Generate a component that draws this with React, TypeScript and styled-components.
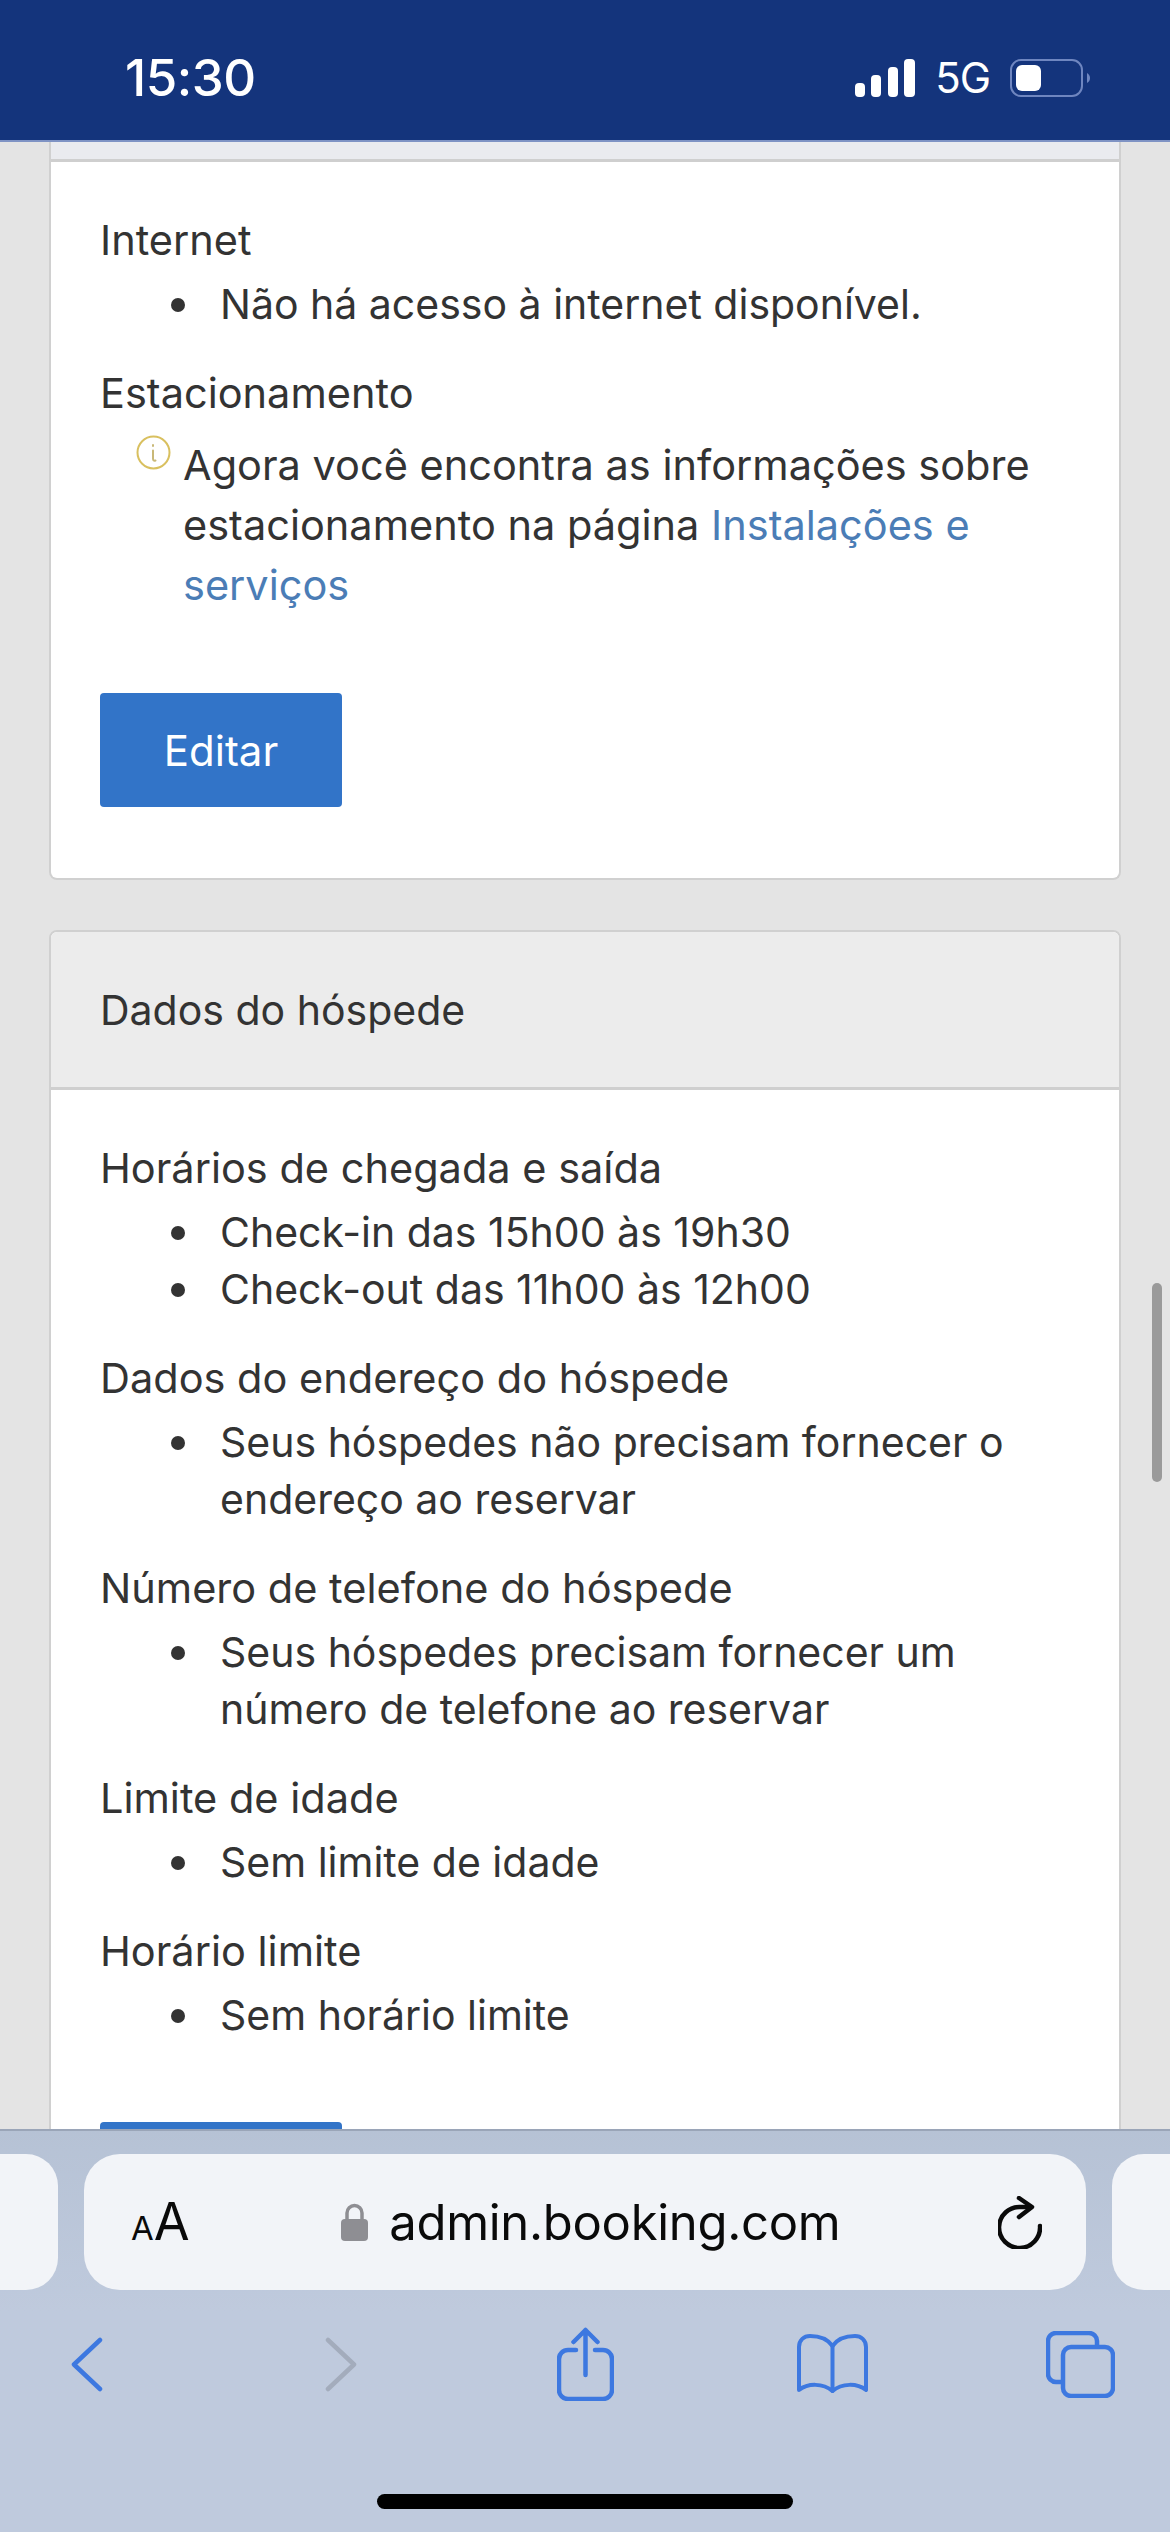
import { FC } from 'react';
import styled, { createGlobalStyle } from 'styled-components';

const GlobalStyle = createGlobalStyle`
  html, body {
    margin: 0;
    padding: 0;
    background: #e4e4e4;
  }
  * {
    box-sizing: border-box;
  }
`;

const Screen = styled.div`
  width: 1170px;
  height: 2532px;
  display: flex;
  flex-direction: column;
  overflow: hidden;
  font-family: Inter, 'Liberation Sans', sans-serif;
  color: #333;
`;

const StatusBar = styled.header`
  flex: none;
  height: 142px;
  padding: 15px 79px 0 125px;
  display: flex;
  align-items: center;
  justify-content: space-between;
  background: #14347c;
  border-bottom: 2px solid #7f93c4;
  color: #fff;
`;

const Clock = styled.span`
  font-size: 51px;
  font-weight: 500;
  letter-spacing: -0.5px;
`;

const StatusIcons = styled.div`
  display: flex;
  align-items: center;
  gap: 20px;
`;

const Network = styled.span`
  font-size: 42px;
  letter-spacing: -1px;
`;

const Main = styled.main`
  flex: 1;
  min-height: 0;
  position: relative;
  overflow: hidden;
  padding: 0 49px;
`;

const ScrollThumb = styled.div`
  position: absolute;
  top: 1141px;
  right: 8px;
  width: 10px;
  height: 199px;
  border-radius: 5px;
  background: #9a9a9a;
`;

const Card = styled.section<{ $clipped?: boolean }>`
  background: #fff;
  border: 2px solid #d0d0d0;
  border-top-width: ${(p) => (p.$clipped ? 0 : 2)}px;
  border-radius: ${(p) => (p.$clipped ? '0 0 8px 8px' : '8px')};
  margin-bottom: 50px;
`;

const CardHeader = styled.h2`
  margin: 0;
  height: 158px;
  padding-left: 49px;
  display: flex;
  align-items: center;
  background: #ececec;
  border-bottom: 3px solid #cfcfcf;
  border-radius: 6px 6px 0 0;
  font-size: 41px;
  font-weight: 420;
  color: #333;
`;

const ClippedHeader = styled.div`
  height: 20px;
  background: #eaebef;
  border-bottom: 3px solid #cfcfcf;
`;

const CardBody = styled.div`
  padding: 48px 49px 71px;
`;

const Heading = styled.h3`
  margin: 0;
  font-size: 41.5px;
  line-height: 60px;
  font-weight: 420;
  color: #333;
`;

const List = styled.ul`
  margin: 6px 0 30px;
  padding: 0 0 0 120px;
  list-style: none;
  font-size: 41px;
  line-height: 57px;
  color: #333;
`;

const Item = styled.li`
  position: relative;

  &::before {
    content: '';
    position: absolute;
    left: -49px;
    top: 22px;
    width: 14px;
    height: 14px;
    border-radius: 50%;
    background: #333;
  }
`;

const Notice = styled.div`
  display: flex;
  align-items: flex-start;
  gap: 11px;
  margin: 12px 0 32px 35px;
  font-size: 41.5px;
  line-height: 60px;
`;

const InfoIcon = styled.svg`
  flex: none;
  width: 37px;
  height: 35px;
`;

const Link = styled.a`
  color: #4b7db6;
`;

/* the top margin collapses with the bottom margin of the list above it */
const EditButton = styled.button`
  display: block;
  width: 242px;
  height: 114px;
  margin-top: 78px;
  border: 0;
  border-radius: 4px;
  background: #3274c8;
  color: #fff;
  font: 400 42px Inter, 'Liberation Sans', sans-serif;
`;

const Toolbar = styled.footer`
  flex: none;
  height: 403px;
  display: flex;
  flex-direction: column;
  padding-top: 23px;
  border-top: 2px solid #9aa5b8;
  background: linear-gradient(#b6c2d5, #bfcadd 45%);
`;

const TabRow = styled.div`
  display: flex;
  gap: 26px;
`;

const SidePill = styled.div<{ $side: 'left' | 'right' }>`
  flex: none;
  width: 58px;
  height: 136px;
  background: #f2f4f8;
  border-radius: ${(p) => (p.$side === 'left' ? '0 32px 32px 0' : '32px 0 0 32px')};
`;

const AddressBar = styled.div`
  flex: none;
  width: 1002px;
  height: 136px;
  padding: 0 44px 0 47px;
  display: flex;
  align-items: center;
  justify-content: space-between;
  background: #f2f4f8;
  border-radius: 36px;
  color: #0a0a0a;
`;

const TextSize = styled.span`
  display: flex;
  align-items: baseline;
  font-size: 52px;
  line-height: 1;
`;

const SmallA = styled.span`
  font-size: 33px;
`;

const Domain = styled.div`
  display: flex;
  align-items: center;
  gap: 21px;
  margin-left: -6px;
  font-size: 49px;
  letter-spacing: -0.3px;
`;

const NavRow = styled.nav`
  height: 100px;
  margin-top: 24px;
  display: grid;
  grid-template-columns: 174px 334px 154px 340px 156px;
  align-items: center;
  justify-items: center;
`;

const HomeBar = styled.div`
  width: 416px;
  height: 15px;
  margin: 80px auto 0;
  border-radius: 8px;
  background: #000;
`;

const BLUE = '#3d78e0';

const SignalIcon: FC = () => (
  <svg width="60" height="38" viewBox="0 0 60 38" fill="#fff">
    <rect x="0" y="24" width="10" height="14" rx="4" />
    <rect x="16" y="16" width="10" height="22" rx="4" />
    <rect x="33" y="8" width="10" height="30" rx="4" />
    <rect x="49" y="0" width="11" height="38" rx="4" />
  </svg>
);

const BatteryIcon: FC = () => (
  <svg width="81" height="38" viewBox="0 0 81 38">
    <rect x="1" y="1" width="71" height="36" rx="10" fill="none" stroke="#6f86c0" strokeWidth="2" />
    <rect x="6" y="6" width="25" height="26" rx="6" fill="#fff" />
    <path d="M77 14c2 1 3 3 3 5s-1 4-3 5z" fill="#6f86c0" />
  </svg>
);

const ReloadIcon: FC = () => (
  <svg width="44" height="53" viewBox="0 0 44 53" fill="none" stroke="#0a0a0a" strokeWidth="4.500" strokeLinecap="round" strokeLinejoin="round">
    <path d="M33 11H23A20.500 20.500 0 1 0 42 30" />
    <path d="M21 2l13 9-13 10" />
  </svg>
);

const LockIcon: FC = () => (
  <svg width="27" height="38" viewBox="0 0 27 38">
    <path d="M6 18v-8a7.500 7.500 0 0 1 15 0v8" fill="none" stroke="#8e8e93" strokeWidth="3.500" />
    <rect x="0" y="16" width="27" height="22" rx="4" fill="#8e8e93" />
  </svg>
);

const BackIcon: FC<{ color: string; flip?: boolean }> = ({ color, flip }) => (
  <svg width="32" height="55" viewBox="0 0 32 55" fill="none" stroke={color} strokeWidth="4.500" strokeLinecap="round" strokeLinejoin="round">
    <path d={flip ? 'M3 3l26 24.500L3 52' : 'M29 3L3 27.500 29 52'} />
  </svg>
);

const ShareIcon: FC = () => (
  <svg width="57" height="74" viewBox="0 0 57 74" fill="none" stroke={BLUE} strokeWidth="4.500" strokeLinecap="round" strokeLinejoin="round">
    <path d="M19 23H11a9 9 0 0 0-9 9v31a9 9 0 0 0 9 9h35a9 9 0 0 0 9-9V32a9 9 0 0 0-9-9h-8" />
    <path d="M28.500 48V3M16.500 15L28.500 3l12 12" />
  </svg>
);

const BookIcon: FC = () => (
  <svg width="73" height="60" viewBox="0 0 73 60" fill="none" stroke={BLUE} strokeWidth="4" strokeLinecap="round" strokeLinejoin="round">
    <path d="M36.500 12C31 4 22 2 14 2 8 2 3 6 3 13v43c9-7 24-7 33.500 1 9.500-8 24.500-8 33.500-1V13c0-7-5-11-11-11-8 0-17 2-22.500 10z" />
    <path d="M36.500 12v45" />
  </svg>
);

const TabsIcon: FC = () => (
  <svg width="69" height="67" viewBox="0 0 69 67" fill="none" stroke={BLUE} strokeWidth="4.500" strokeLinejoin="round">
    <path d="M51 16v-6a8 8 0 0 0-8-8H10a8 8 0 0 0-8 8v33a8 8 0 0 0 8 8h6" />
    <rect x="17" y="16" width="50" height="49" rx="8" />
  </svg>
);

const App: FC = () => (
  <>
    <GlobalStyle />
    <Screen>
      <StatusBar>
        <Clock>15:30</Clock>
        <StatusIcons>
          <SignalIcon />
          <Network>5G</Network>
          <BatteryIcon />
        </StatusIcons>
      </StatusBar>
      <Main>
        <Card $clipped>
          <ClippedHeader />
          <CardBody>
            <Heading>Internet</Heading>
            <List>
              <Item>Não há acesso à internet disponível.</Item>
            </List>
            <Heading>Estacionamento</Heading>
            <Notice>
              <InfoIcon viewBox="0 0 37 35" fill="none" stroke="#d9c05f" strokeWidth="2">
                <circle cx="18.500" cy="17.500" r="16" />
                <path d="M18 15.500v8c0 2 1 2.500 2.500 2M18 10v1" strokeLinecap="round" stroke="#c9b877" />
              </InfoIcon>
              <span>
                Agora você encontra as informações sobre estacionamento na página{' '}
                <Link>Instalações e serviços</Link>
              </span>
            </Notice>
            <EditButton>Editar</EditButton>
          </CardBody>
        </Card>
        <Card>
          <CardHeader>Dados do hóspede</CardHeader>
          <CardBody>
            <Heading>Horários de chegada e saída</Heading>
            <List>
              <Item>Check-in das 15h00 às 19h30</Item>
              <Item>Check-out das 11h00 às 12h00</Item>
            </List>
            <Heading>Dados do endereço do hóspede</Heading>
            <List>
              <Item>Seus hóspedes não precisam fornecer o endereço ao reservar</Item>
            </List>
            <Heading>Número de telefone do hóspede</Heading>
            <List>
              <Item>Seus hóspedes precisam fornecer um número de telefone ao reservar</Item>
            </List>
            <Heading>Limite de idade</Heading>
            <List>
              <Item>Sem limite de idade</Item>
            </List>
            <Heading>Horário limite</Heading>
            <List>
              <Item>Sem horário limite</Item>
            </List>
            <EditButton>Editar</EditButton>
          </CardBody>
        </Card>
        <ScrollThumb />
      </Main>
      <Toolbar>
        <TabRow>
          <SidePill $side="left" />
          <AddressBar>
            <TextSize>
              <SmallA>A</SmallA>A
            </TextSize>
            <Domain>
              <LockIcon />
              admin.booking.com
            </Domain>
            <ReloadIcon />
          </AddressBar>
          <SidePill $side="right" />
        </TabRow>
        <NavRow>
          <BackIcon color={BLUE} />
          <BackIcon color="#a3acbc" flip />
          <ShareIcon />
          <BookIcon />
          <TabsIcon />
        </NavRow>
        <HomeBar />
      </Toolbar>
    </Screen>
  </>
);

export default App;
